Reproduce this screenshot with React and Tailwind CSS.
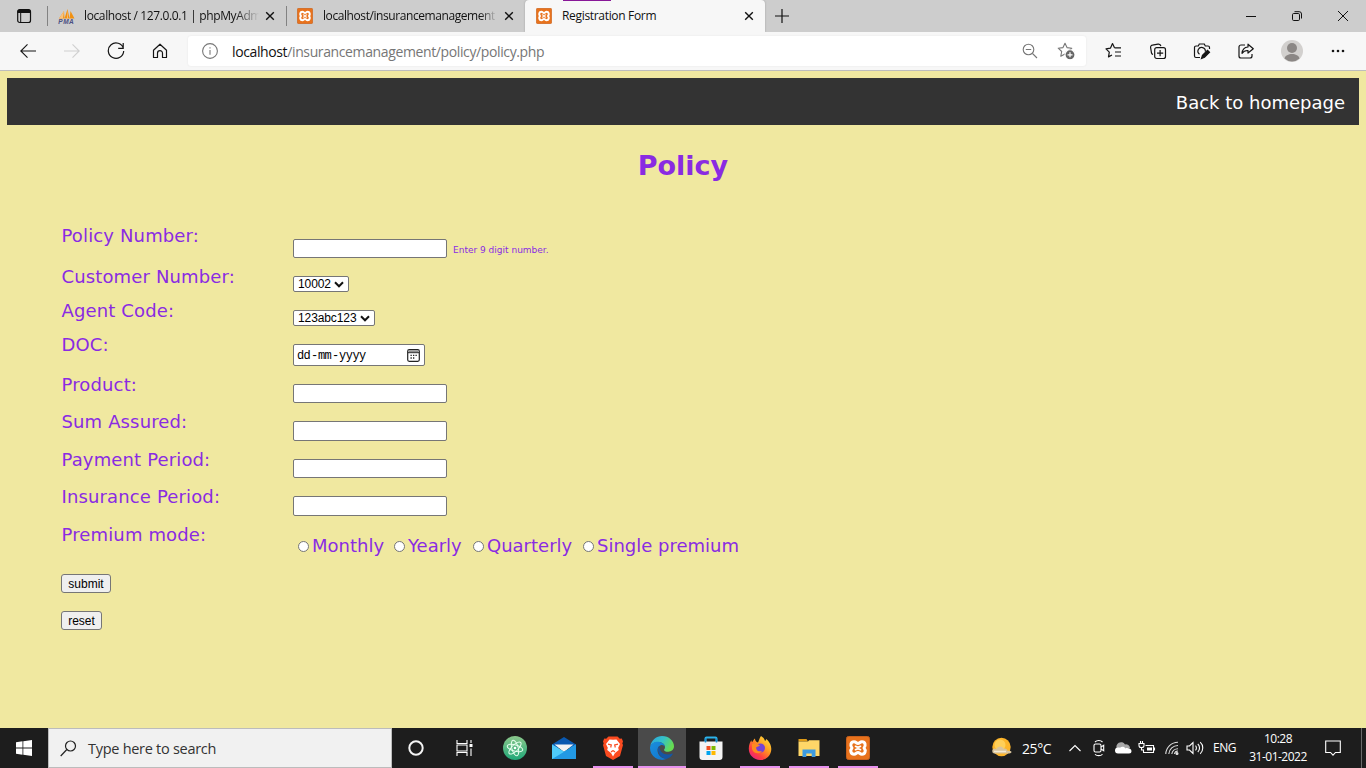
import React from "react";

const UI = "font-['Open_Sans','Noto_Sans',sans-serif]";

function Xampp({ className }) {
  return (
    <svg viewBox="0 0 24 24" className={className}>
      <rect x="0.5" y="0.5" width="23" height="23" rx="2" fill="#e8721c" stroke="#c9611c" />
      <path
        d="M8 5.800C4.800 5.800 3.800 9.700 6 12c-2.200 2.300-1.200 6.200 2 6.200 2.200 0 2.400-1.700 4-1.700s1.800 1.700 4 1.700c3.200 0 4.200-3.900 2-6.200 2.200-2.300 1.200-6.200-2-6.200-2.200 0-2.400 1.700-4 1.700s-1.800-1.700-4-1.700z"
        fill="#e8721c"
        stroke="#fff"
        strokeWidth="3"
        strokeLinejoin="round"
      />
      <path d="M9.500 10.300c1.500.9 3.500.9 5 0M9.500 13.700c1.500-.9 3.500-.9 5 0" fill="none" stroke="#fff" strokeWidth="1.700" strokeLinecap="round" />
    </svg>
  );
}

function Cross({ className = "" }) {
  return (
    <svg viewBox="0 0 10 10" className={"size-[10px] shrink-0 " + className}>
      <path d="M1.200 1.200l7.600 7.600M8.800 1.200L1.200 8.800" stroke="#111" strokeWidth="1.400" />
    </svg>
  );
}

function TabBar() {
  return (
    <div className="flex h-8 bg-[#cdcdcd]">
      <div className="flex w-[47px] items-center pl-[16px]">
        <svg viewBox="0 0 16 16" className="size-4">
          <rect x="1.700" y="1.700" width="12.800" height="12.800" rx="2" fill="none" stroke="#111" strokeWidth="1.200" />
          <path d="M1.500 5V3.500a2 2 0 0 1 2-2h9a2 2 0 0 1 2 2V5z" fill="#111" />
          <path d="M4.700 5v9.500" stroke="#111" />
        </svg>
      </div>
      <div className="mt-[6px] h-5 w-px bg-[#828282]" />
      <div className="flex w-[238px] items-center pl-[10px]">
        <svg viewBox="0 0 17 16" className="h-4 w-[17px]">
          <path d="M1 10.500L6 3l.5 7.500zM6.500 10.500L9.500 1l2 9.500zM11.500 10.500L12.500 3l4 7.500z" fill="#f29111" />
          <path d="M1 10.500L6 3l-1 7.500zM9 10.500L9.500 1l.5 9.500z" fill="#f8c27e" />
          <text x="0.300" y="15.700" fontSize="6.500" fontWeight="bold" fontStyle="italic" fill="#4a4f82" fontFamily="Liberation Sans" textLength="15.500">PMA</text>
        </svg>
        <div className="ml-[9px] w-[175px] whitespace-nowrap bg-gradient-to-r from-[#111] from-[86%] to-[#cdcdcd] bg-clip-text text-[12px] tracking-[-0.38px] text-transparent">
          localhost / 127.0.0.1 | phpMyAdm
        </div>
        <Cross className="ml-[6px]" />
      </div>
      <div className="mt-[6px] h-5 w-px bg-[#828282]" />
      <div className="flex w-[238px] items-center pl-[10px]">
        <Xampp className="size-4" />
        <div className="ml-[10px] w-[174px] whitespace-nowrap bg-gradient-to-r from-[#111] from-[90%] to-[#cdcdcd] bg-clip-text text-[12px] tracking-[-0.42px] text-transparent">
          localhost/insurancemanagement
        </div>
        <Cross className="ml-[7px]" />
      </div>
      <div className="relative flex h-8 w-[240px] items-center rounded-t-[4px] bg-[#f7f7f7] pl-[11px] shadow-[0_0_2px_#999] [clip-path:inset(0_-3px_0_-3px)]">
        <div className="absolute left-[38px] top-0 h-px w-12 bg-[#881798]" />
        <Xampp className="size-4" />
        <div className="ml-[10px] w-[181px] whitespace-nowrap text-[12px] tracking-[-0.32px] text-[#111]">Registration Form</div>
        <Cross className="ml-px" />
      </div>
      <div className="flex w-[34px] items-center justify-center">
        <svg viewBox="0 0 14 14" className="size-[14px]">
          <path d="M7 0v14M0 7h14" stroke="#111" strokeWidth="1.200" />
        </svg>
      </div>
      <div className="ml-auto flex items-center pr-[18px]">
        <svg viewBox="0 0 10 10" className="size-[10px]"><path d="M0 5.500h10" stroke="#111" /></svg>
        <svg viewBox="0 0 10 10" className="ml-[36px] size-[10px]">
          <rect x="0.500" y="2.500" width="7" height="7" rx="1.200" fill="none" stroke="#111" />
          <path d="M2.500 0.700h4.700a2.300 2.300 0 0 1 2.300 2.300v4.500" fill="none" stroke="#111" />
        </svg>
        <svg viewBox="0 0 10 10" className="ml-[36px] size-[10px]"><path d="M0 0l10 10M10 0L0 10" stroke="#111" /></svg>
      </div>
    </div>
  );
}

const STAR = "M8 1.300l2 4.300 4.800.6-3.500 3.300.9 4.700L8 11.900l-4.200 2.300.9-4.700L1.200 6.200 6 5.600z";

function Toolbar() {
  return (
    <div className="flex h-[39px] items-center border-b border-[#bdbdbd] bg-[#f7f7f7] text-[#151515]">
      <svg viewBox="0 0 16 16" className="ml-[20px] size-4" fill="none" stroke="#151515" strokeWidth="1.100">
        <path d="M16 8H.8M7.500 1.300L.8 8l6.700 6.700" />
      </svg>
      <svg viewBox="0 0 16 16" className="ml-[28px] size-4" fill="none" stroke="#cfcfcf" strokeWidth="1.100">
        <path d="M0 8h15.200M8.500 1.300L15.200 8l-6.700 6.700" />
      </svg>
      <svg viewBox="0 0 18 18" className="ml-[27px] size-[18px]" fill="none" stroke="#151515" strokeWidth="1.200">
        <path d="M16.400 6.500A7.700 7.700 0 1 0 16.700 9M16.200 1v5.300h-5" />
      </svg>
      <svg viewBox="0 0 16 16" className="ml-[27px] size-4" fill="none" stroke="#151515" strokeWidth="1.200">
        <path d="M1.500 7.200L8 1.200l6.500 6v7.300h-4V10.200a2.200 2.200 0 0 0-5 0v4.300h-4z" strokeLinejoin="round" />
      </svg>
      <div className="ml-[20px] flex h-[30px] w-[898px] items-center rounded-[3px] bg-white pl-[14px] pr-[11px] shadow-[0_0_2px_#e4e4e4]">
        <svg viewBox="0 0 16 16" className="size-4" fill="none" stroke="#777" strokeWidth="1.100">
          <circle cx="8" cy="8" r="7.400" />
          <path d="M8 7v4.800M8 4.200v1.400" />
        </svg>
        <div className="ml-[14px] whitespace-nowrap text-[14px] tracking-[-0.38px] text-[#767676]">
          <span className="text-[#111]">localhost</span>/insurancemanagement/policy/policy.php
        </div>
        <svg viewBox="0 0 16 16" className="ml-auto size-4" fill="none" stroke="#777" strokeWidth="1.100">
          <circle cx="6.500" cy="6.500" r="5.300" />
          <path d="M10.500 10.500l4.500 4.500M3.800 6.500h5.400" />
        </svg>
        <svg viewBox="0 0 18 18" className="ml-[19px] size-[18px]" fill="none" stroke="#777" strokeWidth="1.100" strokeLinejoin="round">
          <path d={STAR} />
          <circle cx="13" cy="12.800" r="5" fill="#666" stroke="#fff" />
          <path d="M10.500 12.800h5M13 10.300v5" stroke="#fff" strokeWidth="1.200" />
        </svg>
      </div>
      <svg viewBox="0 0 18 18" className="ml-[19px] size-[18px]" fill="none" stroke="#151515" strokeWidth="1.200" strokeLinejoin="round">
        <path d="M9.500 5.800L7.500 1.500l-2 4.600-4.500.7 3.300 3.300-.8 4.800L7 13M9.500 5.900H16M10 10h6M10 14h6" />
      </svg>
      <svg viewBox="0 0 18 18" className="ml-[26px] size-[18px]" fill="none" stroke="#151515" strokeWidth="1.200">
        <path d="M4 12.500A2.500 2.500 0 0 1 2.500 11L1.600 5.500a2 2 0 0 1 1.700-2.300l5.700-1a2.500 2.500 0 0 1 2.900 2" />
        <rect x="5.700" y="5.700" width="10.800" height="10.800" rx="2" />
        <path d="M11.100 8v6.200M8 11.100h6.200" />
      </svg>
      <svg viewBox="0 0 18 18" className="ml-[26px] size-[18px]" fill="none" stroke="#151515" strokeWidth="1.200">
        <path d="M7 15.500H3a1.600 1.600 0 0 1-1.500-1.500V5.500A1.500 1.500 0 0 1 3 4h2.300l1-2h5l1 2H15a1.500 1.500 0 0 1 1.500 1.500V7M6.500 12.200a3.700 3.700 0 1 1 5.800-2.500" />
        <path d="M8.500 16.500l1-3.200 5-5 2 2-5 5z" fill="#151515" />
      </svg>
      <svg viewBox="0 0 18 18" className="ml-[26px] size-[18px]" fill="none" stroke="#151515" strokeWidth="1.200" strokeLinejoin="round">
        <path d="M8 3H4a2 2 0 0 0-2 2v9a2 2 0 0 0 2 2h9a2 2 0 0 0 2-2v-2M11 2.200l5.300 4.500L11 11V8.500c-3-.2-4.500.7-6 2.800.3-3.500 2.300-6 6-6.300z" />
      </svg>
      <svg viewBox="0 0 22 22" className="ml-[26px] size-[22px]">
        <circle cx="11" cy="11" r="11" fill="#d2d0ce" />
        <circle cx="11" cy="8" r="5" fill="#8b8785" />
        <path d="M3.500 18.500c1-6 14-6 15 0a11 11 0 0 1-15 0z" fill="#8b8785" />
      </svg>
      <svg viewBox="0 0 14 4" className="ml-[28px] h-1 w-[14px]" fill="#151515">
        <circle cx="2" cy="2" r="1.300" /><circle cx="7" cy="2" r="1.300" /><circle cx="12" cy="2" r="1.300" />
      </svg>
    </div>
  );
}

function Row({ label, h, children, pad = "pt-[10px]" }) {
  return (
    <div className={"flex " + h}>
      <label className="w-[232px] shrink-0 whitespace-nowrap pl-[0.500px] text-[18px] leading-[22px] tracking-[0.14px]">{label}</label>
      <div className={"flex items-start " + pad}>{children}</div>
    </div>
  );
}

function Field({ h = "h-[19px]" }) {
  return <input type="text" className={"w-[154px] rounded-[2px] border border-[#767676] bg-white px-1 text-[12px] " + h} />;
}

function Picker({ value, w }) {
  return (
    <div className={"flex h-[16px] items-center justify-between rounded-[2px] border border-[#767676] bg-white pl-[4px] pr-[4px] font-['Liberation_Sans',sans-serif] text-[12px] leading-[14px] tracking-[-0.1px] text-black " + w}>
      <span>{value}</span>
      <svg viewBox="0 0 10 7" className="h-[7px] w-[10px]"><path d="M1 1.300l4 4 4-4" fill="none" stroke="#111" strokeWidth="2" /></svg>
    </div>
  );
}

function Radio({ label, w }) {
  return (
    <div className={"flex items-center whitespace-nowrap " + w}>
      <div className="mr-[3px] size-[11px] shrink-0 rounded-full border border-[#767676] bg-white" />
      <span className="text-[18px] leading-[22px]">{label}</span>
    </div>
  );
}

const BTN = "block h-[19px] rounded-[3px] border border-[#767676] bg-[#efefef] font-['Liberation_Sans',sans-serif] text-[12px] leading-[16px] tracking-normal text-black";

function Page() {
  return (
    <main className="h-[657px] bg-[#f0e8a0] px-[7px] pt-[7px] font-['DejaVu_Sans',sans-serif] text-[#8a2be2]">
      <nav className="flex h-[47px] items-center justify-end bg-[#333] pr-[14px] text-[18px] text-white">
        <a className="mt-[2px]">Back to homepage</a>
      </nav>
      <h1 className="mt-[25px] text-center text-[27px] font-bold leading-[32px]">Policy</h1>
      <form className="ml-[54px] mt-[43px]">
        <Row label="Policy Number:" h="h-[41px]" pad="pt-[14px]">
          <Field />
          <span className="ml-[6px] mt-[5px] text-[9px] leading-[13px]">Enter 9 digit number.</span>
        </Row>
        <Row label="Customer Number:" h="h-[34px]"><Picker value="10002" w="w-[56px]" /></Row>
        <Row label="Agent Code:" h="h-[34px]"><Picker value="123abc123" w="w-[82px]" /></Row>
        <Row label="DOC:" h="h-[40px]">
          <div className="flex h-[22px] w-[132px] items-center justify-between rounded-[2px] border border-[#767676] bg-white pl-[3px] pr-[4px] text-black">
            <div className="mt-[2px] flex font-['Liberation_Mono',monospace] text-[12px] leading-[16px]">
              <span className="w-[14px] tracking-[-0.7px]">dd</span>
              <span className="w-[7px]">-</span>
              <span className="w-[14px] tracking-[-0.7px]">mm</span>
              <span className="w-[7px]">-</span>
              <span className="tracking-[-0.500px]">yyyy</span>
            </div>
            <svg viewBox="0 0 13 13" className="size-[13px]">
              <rect x="0.700" y="0.700" width="11.600" height="11.600" rx="1.500" fill="none" stroke="#222" strokeWidth="1.200" />
              <path d="M1 3.700h11" stroke="#222" />
              <path d="M1.500 2.200h10" stroke="#888" strokeWidth="1.500" />
              <path d="M3.500 6.300h6.500M3.500 9h4.500" stroke="#222" strokeWidth="1.300" strokeDasharray="1.300 1.200" />
            </svg>
          </div>
        </Row>
        <Row label="Product:" h="h-[37px]"><Field /></Row>
        <Row label="Sum Assured:" h="h-[38px]"><Field h="h-[20px]" /></Row>
        <Row label="Payment Period:" h="h-[37px]"><Field /></Row>
        <Row label="Insurance Period:" h="h-[38px]"><Field h="h-[20px]" /></Row>
        <Row label="Premium mode:" h="h-[50px]" pad="pl-[5px] pt-[11px]">
          <Radio label="Monthly" w="w-[96px]" />
          <Radio label="Yearly" w="w-[79px]" />
          <Radio label="Quarterly" w="w-[110px]" />
          <Radio label="Single premium" w="w-[160px]" />
        </Row>
        <button type="button" className={"w-[50px] " + BTN}>submit</button>
        <button type="button" className={"mt-[18px] w-[41px] " + BTN}>reset</button>
      </form>
    </main>
  );
}

function Slot({ line, active, children }) {
  return (
    <div className={"relative flex h-10 w-12 shrink-0 items-center justify-center " + (active ? "bg-[#4a4a4a]" : "")}>
      {children}
      {line && <div className={"absolute bottom-0 h-[2px] bg-[#e691ee] " + (active ? "inset-x-0" : "inset-x-1")} />}
    </div>
  );
}

function Apps() {
  return (
    <div className="ml-[3px] flex gap-px">
      <Slot>
        <svg viewBox="0 0 24 24" className="size-6">
          <defs><linearGradient id="atom" x2="0" y2="1"><stop stopColor="#8cc88c" /><stop offset="1" stopColor="#20a878" /></linearGradient></defs>
          <circle cx="12" cy="12" r="12" fill="url(#atom)" />
          <g fill="none" stroke="#e9fff0" strokeWidth="1">
            <ellipse cx="12" cy="12" rx="8" ry="3.200" transform="rotate(15 12 12)" />
            <ellipse cx="12" cy="12" rx="8" ry="3.200" transform="rotate(75 12 12)" />
            <ellipse cx="12" cy="12" rx="8" ry="3.200" transform="rotate(135 12 12)" />
          </g>
          <circle cx="12" cy="12" r="1.300" fill="#fff" />
        </svg>
      </Slot>
      <Slot>
        <svg viewBox="0 0 24 24" className="size-6">
          <path d="M0 8.500L12 1l12 7.500V12H0z" fill="#0a59b0" />
          <path d="M2.500 8.500h19L12 16z" fill="#f4f4f4" />
          <path d="M0 8.500l12 7.200L24 8.500V23H0z" fill="#36b9f2" />
          <path d="M0 23L24 8.500V23z" fill="#2299e4" />
          <path d="M0 8.500L12 15.700 0 23z" fill="#4fcbfa" />
        </svg>
      </Slot>
      <Slot line>
        <svg viewBox="0 0 24 24" className="size-6">
          <path d="M7.500.5h9l2.300 2.300 2-.2 1.200 3-.7 2 .7 1.500-3 11L12 24l-7-3.900-3-11 .7-1.500-.7-2 1.200-3 2 .2z" fill="#fb4b20" />
          <path d="M12 3.800l3.500-.3L19 8l-1.800 3.800.6 2.200-3.800 3L12 20.500 10 17l-3.800-3 .6-2.200L5 8l3.500-4.500z" fill="#fff" />
          <path d="M7 8.200l3.300.8-.6 2.500M17 8.200l-3.300.8.6 2.500M12 14.500l-2 1.500M12 14.500l2 1.500" fill="none" stroke="#fb4b20" strokeWidth="1.200" />
        </svg>
      </Slot>
      <Slot line active>
        <svg viewBox="0 0 24 24" className="size-6">
          <defs>
            <linearGradient id="edge" x1="0" y1="0" x2="1" y2=".4"><stop stopColor="#2aa5e0" /><stop offset=".55" stopColor="#35c1c8" /><stop offset="1" stopColor="#66dc52" /></linearGradient>
            <linearGradient id="edge2" x1="0" y1="0" x2="1" y2="1"><stop stopColor="#1a8fdd" /><stop offset="1" stopColor="#1173cc" /></linearGradient>
          </defs>
          <path d="M.3 10C1.500 4 6.500 0 12 0c7 0 12 5 12 10.300 0 3.400-2.700 5.400-5.700 5.400-2.800 0-4.300-1-4.300-1.800 0-.6 1-1 1-2.900C15 8 11.500 6 8 6 4.500 6 1.500 7.700.3 10z" fill="url(#edge)" />
          <path d="M0 12c0-4 3.500-6.300 7.500-6.300S15 8 15 11c0-1-1.300-2-3-2-2.500 0-4.500 2.300-4.500 5.300 0 5 4.500 9 9.500 8.500A12 12 0 0 1 0 12z" fill="url(#edge2)" />
          <path d="M9.500 9.700C6 13 8.500 21.500 16.500 23c3-1 5.200-3 6.300-5 .2-.4-.1-.7-.5-.5C16 20.200 9 17 9.500 9.700z" fill="#1556a5" />
        </svg>
      </Slot>
      <Slot>
        <svg viewBox="0 0 24 24" className="size-6">
          <path d="M6.500 6V2.500a1 1 0 0 1 1-1h9a1 1 0 0 1 1 1V6" fill="none" stroke="#2cb4ec" strokeWidth="2" />
          <path d="M.5 5.500h23V21a3 3 0 0 1-3 3h-17a3 3 0 0 1-3-3z" fill="#f4f4f4" />
          <path d="M6.500 2.500v4M17.500 2.500v4" stroke="#1790d2" strokeWidth="1.500" />
          <path d="M7.500 10H11.500v4h-4z" fill="#f25022" /><path d="M12.500 10h4v4h-4z" fill="#7fba00" />
          <path d="M7.500 15h4v4h-4z" fill="#00a4ef" /><path d="M12.500 15h4v4h-4z" fill="#ffb900" />
        </svg>
      </Slot>
      <Slot line>
        <svg viewBox="0 0 24 24" className="size-6">
          <defs><linearGradient id="fox" x1="1" y1="0" x2=".2" y2="1"><stop stopColor="#fff044" /><stop offset=".45" stopColor="#ff9a20" /><stop offset=".75" stopColor="#ff4040" /><stop offset="1" stopColor="#e81e80" /></linearGradient></defs>
          <path d="M13 0c2 1 3.500 3 4 5 1-.5 1-1.500 1-2 3 2 5.300 6 5.300 10A11 11 0 0 1 12 24 11.300 11.300 0 0 1 .8 12.500C.8 9 2 6 3.500 4.300c0 1 .2 1.500.5 2C5 5.300 5.500 3.500 7 2.500c0 2 1 3.500 3 4C11 4.500 11.500 2 13 0z" fill="url(#fox)" />
          <circle cx="12.500" cy="12" r="4.500" fill="#7542d5" />
          <path d="M4 8c4-1.500 6 .3 8 1.200-1 1.500-3 1.300-4 2.300 0 3.500 3.500 4.500 6 3.500-2.500 4-9 2.500-10-2z" fill="#ff8a1e" />
        </svg>
      </Slot>
      <Slot line>
        <svg viewBox="0 0 24 24" className="size-6">
          <path d="M1.500 3h8l1.500 2.500H1.500z" fill="#e09b16" />
          <path d="M1.500 5.500h9.500L12 4.200h10.500V20h-21z" fill="#ffd768" />
          <path d="M5.500 13.500h13V21h-3.800v-3.500H9.300V21H5.500z" fill="#3d9be0" />
        </svg>
      </Slot>
      <Slot line><Xampp className="size-6" /></Slot>
    </div>
  );
}

function Tray() {
  const s = { fill: "none", stroke: "#fff", strokeWidth: 1.1 };
  return (
    <div className="ml-auto flex items-center text-white">
      <svg viewBox="0 0 22 22" className="size-[22px]">
        <circle cx="10.500" cy="10" r="9.200" fill="#fdb52a" />
        <circle cx="9" cy="8" r="5.500" fill="#ffcf58" />
        <path d="M3 16.500a2.500 2.500 0 0 1 .5-4.900c1 0 1.500.2 2 .5a3.700 3.700 0 0 1 7-.3c2.500-.8 3.800.7 3.800 2 2 0 4.200 0 4.200 1.200s-2 1.500-4 1.500z" fill="#d9c49c" />
        <path d="M3 14.500h12" stroke="#f3ead4" strokeWidth="1.500" />
      </svg>
      <span className="ml-[9px] w-[31px] whitespace-nowrap text-[14px] tracking-[-0.4px]">25°C</span>
      <svg viewBox="0 0 12 12" className="ml-[16px] size-3" {...s}><path d="M.5 9L6 3.500 11.500 9" /></svg>
      <svg viewBox="0 0 14 18" className="ml-[11px] h-[18px] w-[14px]" {...s}>
        <rect x="2" y="5" width="7" height="8" rx="1.500" /><path d="M9 8l2.700-1.700v5.500L9 10M3 3c2-2 5.500-2 7.500 0M3 15.300c2 1.800 5.500 1.800 7.500 0" />
      </svg>
      <svg viewBox="0 0 18 12" className="ml-[8px] h-3 w-[18px]">
        <path d="M3 7a4.500 4.500 0 0 1 8-4.500A4 4 0 0 1 16 6z" fill="#a8a8a8" />
        <path d="M4 11.500a3 3 0 0 1 0-6c1-.1 1.500.1 2 .3 1.500-1.500 4-1.300 5.200.4C14 5.500 17.500 6.500 17.500 9a2.500 2.500 0 0 1-2.500 2.500z" fill="#fff" />
      </svg>
      <svg viewBox="0 0 18 14" className="ml-[6px] h-[14px] w-[18px]" {...s}>
        <path d="M7.500 4.500H15.500v7h-10V8.500M16.500 6.500v3" /><path d="M9 6.500h5v3H9z" fill="#fff" stroke="none" />
        <path d="M2.500 0v2.500M4.500 0v2.500M1 2.500h5v2a2 2 0 0 1-2 2H3a2 2 0 0 1-2-2zM3.500 6.500v2.500h2" />
      </svg>
      <svg viewBox="0 0 14 14" className="ml-[9px] size-[14px]" fill="none" stroke="#ddd" strokeWidth="1.100">
        <path d="M.8 13A12.200 12.200 0 0 1 13 1.200M3.800 13A9.200 9.200 0 0 1 13 4.500M6.800 13A6.200 6.200 0 0 1 13 7.800" />
        <path d="M9.500 13a3.500 3.500 0 0 1 3.500-3" /><circle cx="12" cy="12.500" r="1" fill="#fff" />
      </svg>
      <svg viewBox="0 0 18 14" className="ml-[7px] h-[14px] w-[18px]" {...s}>
        <path d="M1 5h2.500L7 1.500v11L3.500 9H1zM9.500 4.700c1.200 1.200 1.200 3.400 0 4.600M11.800 3c2.300 2 2.300 6 0 8M14.200 1.200c3.400 3 3.400 8.600 0 11.600" />
      </svg>
      <span className="ml-[9px] w-[24px] text-[12px] tracking-[-0.45px]">ENG</span>
      <div className="ml-[10px] w-[62px] whitespace-nowrap text-center text-[12px] leading-[18px] tracking-[-0.5px]">
        <div>10:28</div>
        <div>31-01-2022</div>
      </div>
      <svg viewBox="0 0 16 16" className="ml-[16px] size-4" {...s}><path d="M.7 1h14.600v11.500h-4.800L8 15.200l-2.500-2.700H.7z" /></svg>
      <div className="ml-[20px] mr-1 h-10 w-px bg-[#6a6a6a]" />
    </div>
  );
}

function Taskbar() {
  return (
    <footer className="flex h-10 bg-[#1d1d1d]">
      <div className="flex w-12 items-center justify-center">
        <svg viewBox="0 0 16 16" className="size-4" fill="#fff">
          <path d="M0 2.200L6.500 1.300v6.200H0zM7.300 1.200L16 0v7.500H7.300zM0 8.400h6.500v6.300L0 13.800zM7.300 8.400H16V16l-8.700-1.200z" />
        </svg>
      </div>
      <div className="flex w-[344px] items-center border border-[#bcbcbc] bg-[#f1f1f1] pl-[11px]">
        <svg viewBox="0 0 17 17" className="size-[17px]" fill="none" stroke="#222" strokeWidth="1.200">
          <circle cx="10.500" cy="6" r="5" /><path d="M6.800 9.500L.7 16" />
        </svg>
        <span className="ml-[11px] mt-[2px] text-[14.500px] tracking-[-0.28px] text-[#333]">Type here to search</span>
      </div>
      <Slot>
        <svg viewBox="0 0 16 16" className="size-4"><circle cx="8" cy="8" r="6.700" fill="none" stroke="#f4f4f4" strokeWidth="2" /></svg>
      </Slot>
      <Slot>
        <svg viewBox="0 0 17 16" className="h-4 w-[17px]" fill="none" stroke="#fff" strokeWidth="1.100">
          <path d="M1 0v3.500h10V0M1 16v-3.500h10V16M1 5h10v6H1zM15 0v3M15 8.500V16" /><path d="M13.500 4h3v3h-3z" fill="#fff" stroke="none" />
        </svg>
      </Slot>
      <Apps />
      <Tray />
    </footer>
  );
}

export default function App() {
  return (
    <div className={"h-[768px] w-[1366px] overflow-hidden " + UI}>
      <TabBar />
      <Toolbar />
      <Page />
      <Taskbar />
    </div>
  );
}
